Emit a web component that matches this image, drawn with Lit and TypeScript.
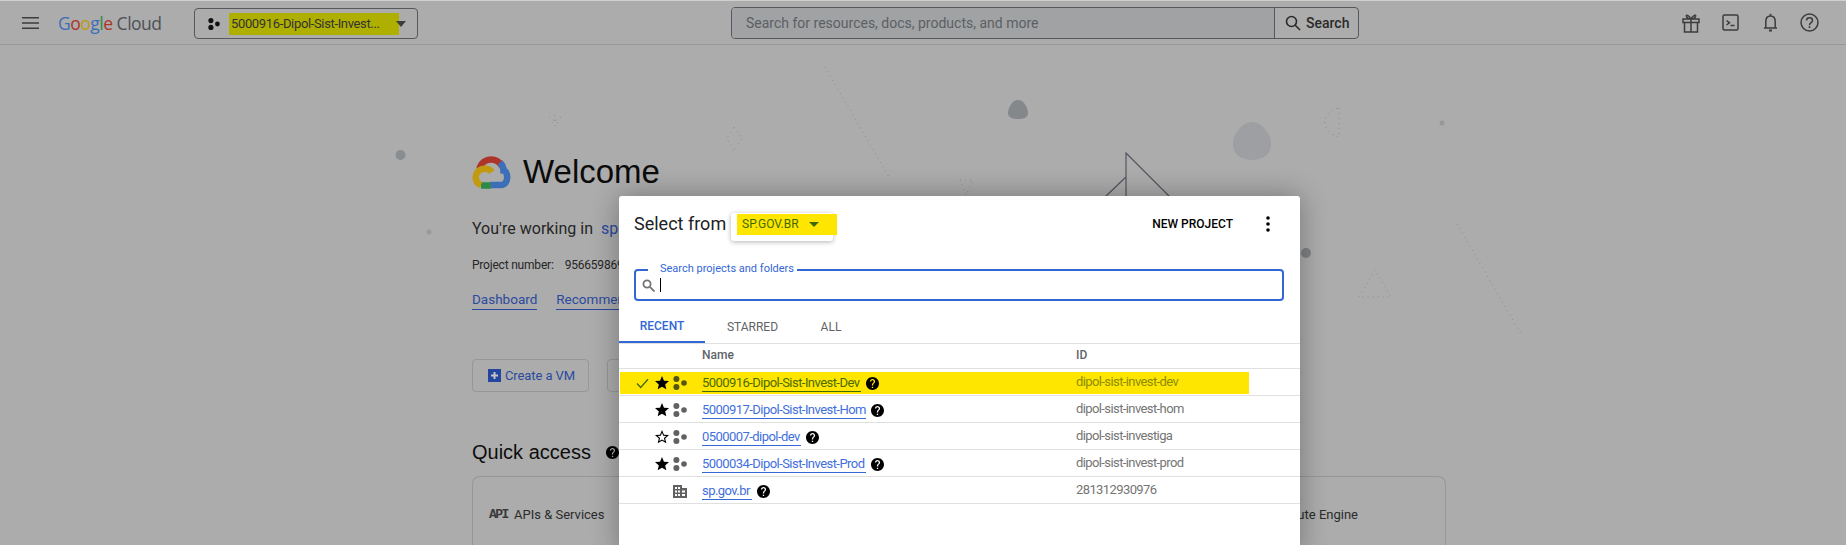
import { LitElement, html, css, svg } from 'lit';
import { customElement } from 'lit/decorators.js';

const projectIcon = (color: string, size = 14) => html`<svg width=${size} height=${size} viewBox="0 0 14 14" fill=${color}>
  <circle cx="3.4" cy="3" r="3"></circle><circle cx="3.4" cy="11" r="3"></circle><circle cx="11" cy="7" r="2.8"></circle>
</svg>`;

const helpIcon = (size = 13) => html`<svg class="help" width=${size} height=${size} viewBox="2 2 20 20" fill="#000">
  <path d="M12 2C6.48 2 2 6.48 2 12s4.48 10 10 10 10-4.480 10-10S17.520 2 12 2zm1 17h-2v-2h2v2zm2.070-7.750l-.9.920C13.450 12.900 13 13.500 13 15h-2v-.5c0-1.100.45-2.100 1.170-2.830l1.240-1.260c.37-.360.590-.860.590-1.410 0-1.100-.9-2-2-2s-2 .9-2 2H8c0-2.210 1.790-4 4-4s4 1.790 4 4c0 .880-.360 1.680-.930 2.250z"></path>
</svg>`;

const starFull = html`<svg width="14" height="14" viewBox="2 2 20 20" fill="#000">
  <path d="M12 17.270L18.180 21l-1.640-7.030L22 9.240l-7.190-.610L12 2 9.190 8.630 2 9.240l5.460 4.730L5.820 21z"></path>
</svg>`;

const starEmpty = html`<svg width="14" height="14" viewBox="2 2 20 20" fill="#000">
  <path d="M22 9.240l-7.190-.620L12 2 9.190 8.630 2 9.240l5.460 4.730L5.820 21 12 17.270 18.180 21l-1.630-7.030L22 9.240zM12 15.400l-3.760 2.270 1-4.280-3.320-2.880 4.380-.380L12 6.100l1.710 4.040 4.380.380-3.320 2.880 1 4.280L12 15.400z"></path>
</svg>`;

const buildingIcon = html`<svg width="14" height="14" viewBox="0 0 14 14" fill="#616161">
  <path d="M0 1h9v3h5v10H0zM2 3v2h2V3zm3 0v2h2V3zM2 6.500v2h2v-2zm3 0v2h2v-2zm4 0v2h3v-2zM2 10v2h2v-2zm3 0v2h2v-2zm4 0v2h3v-2z" fill-rule="evenodd"></path>
</svg>`;

const dotted = (d: string) => svg`<path d=${d} fill="none" stroke="#8b8c8e" stroke-width="1" stroke-dasharray="1 4"></path>`;

// background illustration behind the welcome page
const backdrop = html`<svg class="backdrop" width="1846" height="545" viewBox="0 0 1846 545">
  <circle cx="400.500" cy="155" r="5" fill="#8a8d90"></circle>
  <circle cx="429" cy="232" r="2.500" fill="#98999b"></circle>
  <circle cx="1306" cy="253" r="5" fill="#7f8184"></circle>
  <circle cx="1442" cy="123" r="2.500" fill="#97989a"></circle>
  <path d="M1018 100c6 0 10 8 10 13 0 5-5 6-10 6s-10-1-10-6c0-5 4-13 10-13z" fill="#85888b"></path>
  <path d="M1252 122c10 0 19 12 19 22 0 11-9 16-19 16s-19-5-19-16c0-10 9-22 19-22z" fill="#9e9fa2"></path>
  ${dotted('M825 67L889 177')}
  ${dotted('M1457 224L1521 334')}
  ${dotted('M1375 270L1359 297L1391 297Z')}
  ${dotted('M734 127L742 138L734 151L727 138Z')}
  ${dotted('M1339 108L1339 137C1320 132 1320 112 1339 108Z')}
  ${dotted('M549 117L561 125M561 117L549 125M555 115L555 127')}
  ${dotted('M960 180L973 180L966 195Z')}
  <path d="M1126 196V153L1169 196M1126 177L1106 196" fill="none" stroke="#53565f" stroke-width="1.200"></path>
</svg>`;

const rows = [
  { name: '5000916-Dipol-Sist-Invest-Dev', id: 'dipol-sist-invest-dev', star: true, active: true, width: 159 },
  { name: '5000917-Dipol-Sist-Invest-Hom', id: 'dipol-sist-invest-hom', star: true, active: false, width: 164 },
  { name: '0500007-dipol-dev', id: 'dipol-sist-investiga', star: false, active: false, width: 99 },
  { name: '5000034-Dipol-Sist-Invest-Prod', id: 'dipol-sist-invest-prod', star: true, active: false, width: 164 },
  { name: 'sp.gov.br', id: '281312930976', org: true, active: false, width: 50 },
];

@customElement('app-root')
export class AppRoot extends LitElement {
  static styles = css`
    :host {
      display: block;
      font-family: Roboto, "Liberation Sans", sans-serif;
    }
    .page {
      position: relative;
      height: 545px;
      overflow: hidden;
      background: #acacac;
      border-top: 1px solid #cfcfcf;
      box-sizing: border-box;
    }
    .backdrop {
      position: absolute;
      left: 0;
      top: -1px;
    }
    .topbar {
      position: relative;
      display: flex;
      align-items: center;
      height: 44px;
      box-sizing: border-box;
      border-bottom: 1px solid #989898;
      padding: 0 27px 0 22px;
    }
    .burger {
      display: block;
      width: 17px;
      margin-right: 19px;
    }
    .logo {
      font-family: "Open Sans", sans-serif;
      font-size: 17.5px;
      letter-spacing: -0.5px;
      width: 136px;
      color: #4d5156;
      white-space: nowrap;
    }
    .b { color: #3d6fb8; }
    .r { color: #ad3429; }
    .y { color: #c19a10; }
    .g { color: #2f8a48; }
    .picker {
      display: flex;
      align-items: center;
      width: 224px;
      height: 31px;
      box-sizing: border-box;
      border: 1px solid #55585c;
      border-radius: 4px;
      padding-left: 13px;
      margin-top: 2px;
    }
    .picker-name {
      display: flex;
      align-items: center;
      margin-left: 9px;
      width: 170px;
      height: 22px;
      padding-left: 2px;
      box-sizing: border-box;
      background: #afaf00;
      font-size: 13px;
      letter-spacing: -0.35px;
      color: #333;
      white-space: nowrap;
    }
    .picker-name span {
      flex: none;
      width: 165px;
    }
    .picker-name i {
      flex: none;
      width: 0;
      height: 0;
      border: 5.500px solid transparent;
      border-top: 6px solid #3c3c3c;
      border-bottom: 0;
    }
    .search {
      display: flex;
      align-items: stretch;
      width: 628px;
      height: 32px;
      box-sizing: border-box;
      margin: 1px 0 0 313px;
      border: 1px solid #55585c;
      border-radius: 4px;
      overflow: hidden;
    }
    .search-input {
      flex: 1;
      display: flex;
      align-items: center;
      padding-left: 14px;
      background: #a0a2a4;
      color: #5c5f63;
      font-size: 14px;
    }
    .search-btn {
      display: flex;
      align-items: center;
      gap: 5px;
      width: 84px;
      box-sizing: border-box;
      padding-left: 10px;
      border-left: 1px solid #55585c;
      color: #2a2a2a;
      font-size: 14px;
      font-weight: 500;
    }
    .tools {
      display: flex;
      align-items: center;
      gap: 22px;
      margin-left: auto;
    }
    .tools .bell {
      margin-left: 2px;
    }
    .content {
      position: relative;
      padding: 110px 0 0 472px;
    }
    .welcome {
      display: flex;
      align-items: center;
      gap: 11px;
      height: 34px;
      line-height: 34px;
      font-family: "Liberation Sans", sans-serif;
      font-size: 33px;
      color: #0b0b0b;
    }
    .working {
      margin-top: 29px;
      font-size: 16px;
      line-height: 22px;
      letter-spacing: 0.02px;
      color: #262626;
      white-space: nowrap;
    }
    .working a { color: #2b4a9e; margin-left: 4px; }
    .number {
      margin-top: 17px;
      font-size: 12px;
      line-height: 16px;
      letter-spacing: -0.2px;
      color: #262626;
      white-space: nowrap;
    }
    .number span { margin-left: 11px; }
    .links {
      display: flex;
      gap: 19px;
      margin-top: 18px;
      font-size: 13.500px;
      color: #2b4a9e;
    }
    .links a {
      border-bottom: 1px solid #2b4a9e;
      padding-bottom: 1px;
      line-height: 17px;
    }
    .actions {
      display: flex;
      gap: 18px;
      margin-top: 49px;
    }
    .btn {
      display: flex;
      align-items: center;
      gap: 4px;
      width: 117px;
      height: 33px;
      box-sizing: border-box;
      padding-left: 15px;
      border: 1px solid #979797;
      border-radius: 4px;
      color: #2b4a9e;
      font-size: 13px;
      letter-spacing: -0.1px;
    }
    .plus {
      display: block;
    }
    .quick {
      display: flex;
      align-items: center;
      gap: 15px;
      margin-top: 47px;
      height: 26px;
      font-family: "Liberation Sans", sans-serif;
      font-size: 20px;
      color: #0e0e0e;
    }
    .cards {
      display: flex;
      justify-content: space-between;
      align-items: center;
      width: 974px;
      height: 90px;
      box-sizing: border-box;
      margin-top: 11px;
      padding: 0 87px 14px 16px;
      border: 1px solid #979797;
      border-bottom: 0;
      border-radius: 8px 8px 0 0;
      font-size: 13px;
      color: #2b2b2b;
    }
    .api {
      display: flex;
      align-items: center;
      gap: 6px;
    }
    .api b {
      font-family: "Liberation Mono", monospace;
      font-size: 13px;
      letter-spacing: -1.500px;
      width: 19px;
      color: #3a3a3a;
    }
    .modal {
      position: absolute;
      left: 619px;
      top: 195px;
      width: 681px;
      height: 360px;
      background: #fff;
      border-radius: 3px 3px 0 0;
      box-shadow: 0 0 28px rgba(0, 0, 0, 0.32);
    }
    .modal-head {
      display: flex;
      align-items: center;
      height: 56px;
      padding-left: 15px;
    }
    .modal-title {
      font-size: 18px;
      color: #202124;
      width: 97px;
      margin-top: -2px;
    }
    .org {
      display: flex;
      width: 102px;
      height: 28px;
      margin-top: 5px;
      border-radius: 3px;
      background: #fff;
      box-shadow: 0 1px 5px rgba(0, 0, 0, 0.3);
    }
    .org-name {
      display: flex;
      align-items: center;
      flex: none;
      width: 100px;
      height: 21px;
      margin: 1px 0 0 6px;
      padding-left: 5px;
      box-sizing: border-box;
      background: #ffe600;
      font-size: 12px;
      color: #3f6a00;
    }
    .org-name i {
      margin-left: 10px;
      width: 0;
      height: 0;
      border: 5px solid transparent;
      border-top: 5.500px solid #3f6a00;
      border-bottom: 0;
    }
    .new {
      margin-left: auto;
      font-size: 12px;
      font-weight: 500;
      color: #000;
    }
    .more {
      display: block;
      margin: 0 30px 0 33px;
    }
    .find {
      position: relative;
      display: flex;
      align-items: center;
      gap: 5px;
      height: 32px;
      width: 650px;
      box-sizing: border-box;
      margin: 17px 0 0 15px;
      padding-left: 6px;
      border: 2px solid #3367d6;
      border-radius: 4px;
    }
    .find label {
      position: absolute;
      left: 12px;
      top: -9px;
      padding: 0 3px 0 12px;
      background: #fff;
      font-size: 11px;
      line-height: 14px;
      color: #3367d6;
    }
    .caret {
      width: 1px;
      height: 14px;
      background: #000;
    }
    .tabs {
      display: flex;
      height: 43px;
      box-sizing: border-box;
      border-bottom: 1px solid #e0e0e0;
      font-size: 12px;
      color: #5f6368;
    }
    .tab {
      display: flex;
      align-items: center;
      justify-content: center;
      height: 42px;
      box-sizing: border-box;
      padding-top: 10px;
    }
    .tab.recent {
      width: 86px;
      color: #3367d6;
      font-weight: 500;
      border-bottom: 2px solid #3367d6;
    }
    .tab.starred { width: 95px; }
    .tab.all { width: 62px; }
    .row {
      height: 27px;
      box-sizing: border-box;
      border-bottom: 1px solid #e0e0e0;
      padding: 3px 0 0 1px;
    }
    .row.heading {
      height: 25px;
      padding-top: 0;
      font-size: 12px;
      font-weight: 500;
      color: #5f6368;
    }
    .cells {
      display: grid;
      grid-template-columns: 35px 18px 29px 374px 1fr;
      align-items: center;
      width: 629px;
      height: 22px;
    }
    .cells.active {
      background: #ffe600;
    }
    .cell-check {
      padding-left: 16px;
      display: flex;
    }
    .cell-icon {
      display: flex;
    }
    .name {
      display: flex;
      align-items: center;
      gap: 5px;
    }
    .name a {
      display: block;
      box-sizing: border-box;
      font-size: 13px;
      letter-spacing: -0.55px;
      line-height: 17px;
      color: #3f6fdc;
      border-bottom: 1px solid #3367d6;
      white-space: nowrap;
    }
    .active .name a {
      color: #4a6b00;
      border-bottom-color: #3f6a00;
    }
    .id {
      font-size: 13px;
      letter-spacing: -0.6px;
      color: #757575;
      margin-top: -3px;
    }
    .active .id {
      color: #8c8c00;
    }
    .help {
      display: block;
      flex: none;
    }
  `;

  render() {
    return html`
      <div class="page">
        ${backdrop}
        <div class="topbar">
          <svg class="burger" width="17" height="12" viewBox="0 0 17 12" fill="#3c3c3c">
            <path d="M0 0h17v1.600H0zM0 5.200h17v1.600H0zM0 10.400h17V12H0z"></path>
          </svg>
          <div class="logo"><span class="b">G</span><span class="r">o</span><span class="y">o</span><span class="b">g</span><span class="g">l</span><span class="r">e</span> Cloud</div>
          <div class="picker">
            ${projectIcon('#111', 12)}
            <div class="picker-name"><span>5000916-Dipol-Sist-Invest...</span><i></i></div>
          </div>
          <div class="search">
            <div class="search-input">Search for resources, docs, products, and more</div>
            <div class="search-btn">
              <svg width="16" height="16" viewBox="0 0 16 16" fill="none" stroke="#2a2a2a" stroke-width="1.600">
                <circle cx="6.500" cy="6.500" r="5"></circle><path d="M10 10l5 5"></path>
              </svg>
              Search
            </div>
          </div>
          <div class="tools">
            <svg width="18" height="20" viewBox="0 0 18 20" fill="none" stroke="#3c3c3c" stroke-width="1.500">
              <path d="M1 6h16v3.500H1zM2.500 9.500V19h13V9.500M9 6v13M9 6C7 2 3.500 1 4.500 3.500 5 5 7 6 9 6zM9 6c2-4 5.500-5 4.500-2.500C13 5 11 6 9 6z"></path>
            </svg>
            <svg width="17" height="17" viewBox="0 0 17 17" fill="none" stroke="#3c3c3c" stroke-width="1.500">
              <rect x="1" y="1" width="15" height="15" rx="1.500"></rect><path d="M4.500 6.500L7.500 8.800 4.500 11M8.500 11.500h4"></path>
            </svg>
            <svg class="bell" width="15" height="19" viewBox="0 0 15 19" fill="none" stroke="#3c3c3c" stroke-width="1.500">
              <path d="M1 15h13M2.800 15V8.500C2.800 5 4.500 3 7.500 3s4.700 2 4.700 5.500V15"></path>
              <circle cx="7.500" cy="1.800" r="1" fill="#3c3c3c" stroke="none"></circle>
              <path d="M6 17.500h3" stroke-width="2"></path>
            </svg>
            <svg width="19" height="19" viewBox="0 0 19 19" fill="none" stroke="#3c3c3c" stroke-width="1.500">
              <circle cx="9.500" cy="9.500" r="8.500"></circle>
              <path d="M6.500 7.500C6.500 5.800 7.800 4.800 9.500 4.800s3 1 3 2.600c0 2.200-3 2.300-3 4.800"></path>
              <path d="M9.500 13.300v1.700" stroke-width="1.700"></path>
            </svg>
          </div>
        </div>
        <div class="content">
          <div class="welcome">
            <svg width="40" height="33" viewBox="0 0 40 33" fill="none" stroke-width="6.500">
              <path d="M7.500 13C9 6.500 14 3.500 19 3.500c5 0 8.500 2.500 11 6.500" stroke="#ad3429"></path>
              <path d="M28 6.500c2 2 3.500 5 3.500 8 5 .5 5.500 14.500-2.500 14.500H18" stroke="#3d6fb8"></path>
              <path d="M19 29.500H9" stroke="#2f8a48"></path>
              <path d="M20 16C17 11.500 9 12 6 15.500 2 20 3.500 27 9 29" stroke="#c19a10"></path>
            </svg>
            Welcome
          </div>
          <div class="working">You're working in <a>sp.gov.br</a></div>
          <div class="number">Project number:<span>956659869</span></div>
          <div class="links"><a>Dashboard</a><a>Recommendations</a></div>
          <div class="actions">
            <div class="btn">
              <svg class="plus" width="13" height="13" viewBox="0 0 13 13">
                <rect width="13" height="13" fill="#24469e"></rect>
                <path d="M5.500 3h2v2.500H10v2H7.500V10h-2V7.500H3v-2h2.500z" fill="#c4c4c4"></path>
              </svg>
              Create a VM
            </div>
            <div class="btn"></div>
          </div>
          <div class="quick">Quick access ${helpIcon(13)}</div>
          <div class="cards">
            <div class="api"><b>API</b>APIs &amp; Services</div>
            <div>Compute Engine</div>
          </div>
        </div>
        <div class="modal">
          <div class="modal-head">
            <div class="modal-title">Select from</div>
            <div class="org"><div class="org-name">SP.GOV.BR<i></i></div></div>
            <div class="new">NEW PROJECT</div>
            <svg class="more" width="4" height="16" viewBox="0 0 4 16" fill="#000">
              <circle cx="2" cy="2" r="1.800"></circle><circle cx="2" cy="8" r="1.800"></circle><circle cx="2" cy="14" r="1.800"></circle>
            </svg>
          </div>
          <div class="find">
            <label>Search projects and folders</label>
            <svg width="13" height="13" viewBox="0 0 13 13" fill="none" stroke="#757575" stroke-width="1.800">
              <circle cx="5" cy="5" r="3.600"></circle><path d="M7.800 7.800L12.500 12.500"></path>
            </svg>
            <div class="caret"></div>
          </div>
          <div class="tabs">
            <div class="tab recent">RECENT</div>
            <div class="tab starred">STARRED</div>
            <div class="tab all">ALL</div>
          </div>
          <div class="row heading">
            <div class="cells"><span></span><span></span><span></span><span>Name</span><span>ID</span></div>
          </div>
          ${rows.map(
            r => html`<div class="row">
              <div class="cells ${r.active ? 'active' : ''}">
                <div class="cell-check">
                  ${r.active
                    ? html`<svg width="13" height="11" viewBox="0 0 13 11" fill="none" stroke="#3f6a00" stroke-width="1.300"><path d="M1 5.500L4.700 9.500 12 1.200"></path></svg>`
                    : ''}
                </div>
                <div class="cell-icon">${r.org ? '' : r.star ? starFull : starEmpty}</div>
                <div class="cell-icon">${r.org ? buildingIcon : projectIcon(r.active ? '#55550f' : '#616161')}</div>
                <div class="name">
                  <a style="width:${r.width}px">${r.name}</a>
                  ${helpIcon()}
                </div>
                <div class="id">${r.id}</div>
              </div>
            </div>`
          )}
        </div>
      </div>
    `;
  }
}
